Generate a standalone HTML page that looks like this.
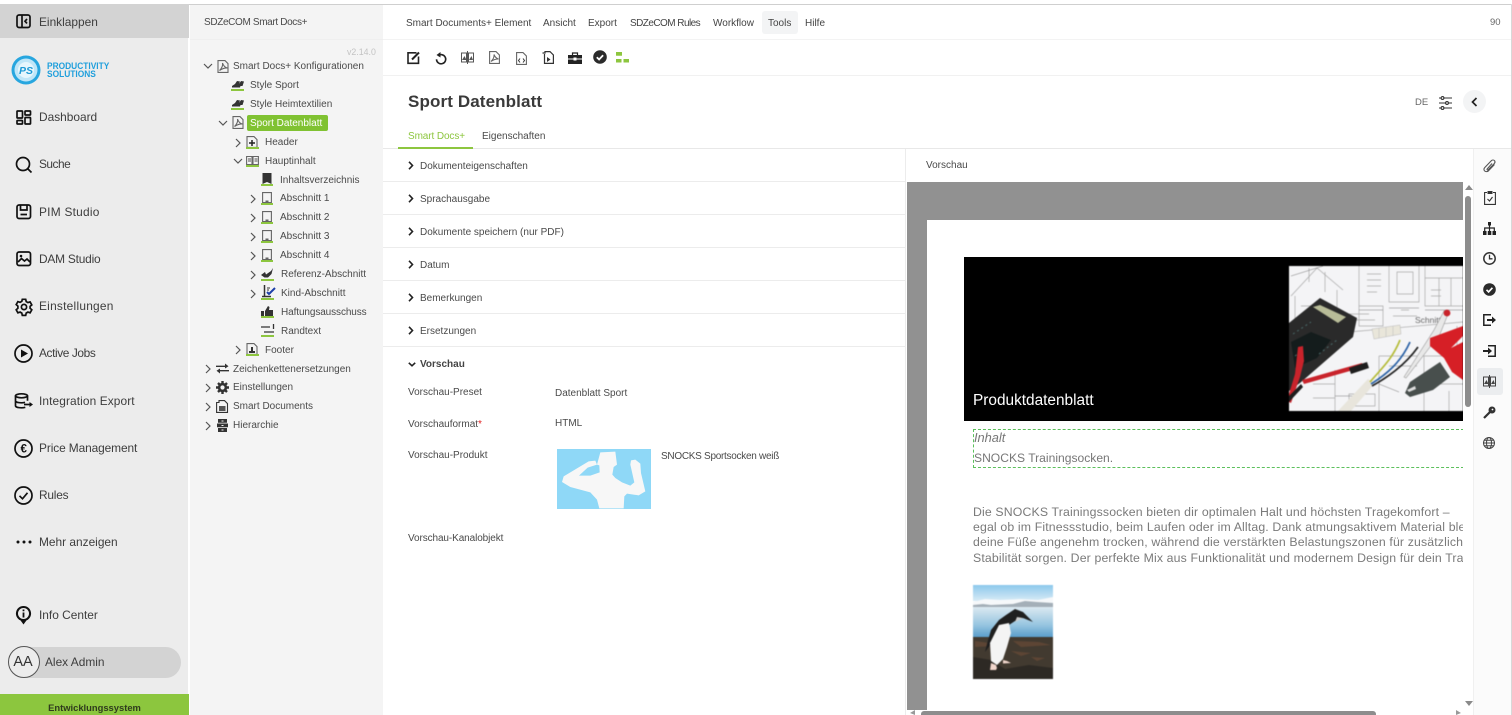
<!DOCTYPE html>
<html lang="de">
<head>
<meta charset="utf-8">
<title>Sport Datenblatt</title>
<style>
html,body{margin:0;padding:0;width:1512px;height:715px;overflow:hidden;background:#fff}
body{position:relative;font-family:"Liberation Sans",sans-serif;color:#444;font-size:10px}
.b{position:absolute}
.t{position:absolute;white-space:nowrap;line-height:14px;height:14px}
.n{font-size:11.900px;left:39px;color:#3d3d3d;margin-top:1px}
.r{font-size:10px;color:#4a4a4a;margin-top:1px}
.m{font-size:10px;color:#444;top:16px;margin-top:1px}
.s{font-size:10px;color:#4a4a4a;left:420px;margin-top:1.500px}
.l{font-size:10px;color:#4a4a4a;left:408px;margin-top:1px}
svg{position:absolute;overflow:visible}
.i{fill:none;stroke:#111;stroke-width:1.7}
.h{fill:none;stroke:#666;stroke-width:1.1}
.c{fill:none;stroke:#555;stroke-width:1.2}
.k{fill:none;stroke:#222;stroke-width:1.6}
.g{position:absolute;height:2px;background:#8dc63f}
.sep{position:absolute;left:383px;width:522px;height:1px;background:#ececec}
.p{left:46px;font-size:12.300px;letter-spacing:.14px;color:#7a7a7a;height:15px;line-height:15px}
</style>
</head>
<body>
<!-- backgrounds -->
<div class="b" style="left:0;top:4px;width:1512px;height:1px;background:#cfcfcf"></div>
<div class="b" style="left:0;top:5px;width:188px;height:710px;background:#ececec"></div>
<div class="b" style="left:0;top:4px;width:189px;height:34px;background:#d3d3d3"></div>
<div class="b" style="left:190px;top:5px;width:193px;height:710px;background:#f4f4f4"></div>
<div class="b" style="left:190px;top:39px;width:193px;height:1px;background:#efefef"></div>
<div class="b" style="left:1511px;top:4px;width:1px;height:711px;background:#d8d8d8"></div>

<!-- main nav -->
<svg style="left:16px;top:14px" width="16" height="15" viewBox="0 0 16 15"><rect class="i" x="1" y="1" width="13" height="12.500" rx="2"/><path class="i" d="M6 1v12.500M11 5l-2 2.200 2 2.200"/></svg>
<div class="t n" style="top:14px">Einklappen</div>

<!-- logo -->
<svg style="left:11px;top:55px" width="30" height="30" viewBox="0 0 30 30"><circle cx="15" cy="15" r="14.500" fill="#27a6df"/><circle cx="15" cy="15" r="11.500" fill="#bfe6f8"/><circle cx="15" cy="15" r="8" fill="#e6f6fd"/><text x="15" y="19" text-anchor="middle" font-family="Liberation Sans" font-size="10.500" font-style="italic" font-weight="700" fill="#1d9ad6">PS</text></svg>
<div class="t" style="left:47px;top:62px;height:8px;line-height:8px;font-size:9px;font-weight:700;color:#1f9fdc;transform:scaleX(.93);transform-origin:0 0">PRODUCTIVITY</div>
<div class="t" style="left:47px;top:70px;height:8px;line-height:8px;font-size:9px;font-weight:700;color:#1f9fdc;transform:scaleX(.93);transform-origin:0 0">SOLUTIONS</div>

<svg style="left:16px;top:110px" width="16" height="15" viewBox="0 0 16 15"><g class="i"><rect x="1" y="1" width="5.500" height="7" rx=".6"/><rect x="9" y="1" width="5.500" height="4" rx=".6"/><rect x="1" y="10.500" width="5.500" height="3.500" rx=".6"/><rect x="9" y="7.500" width="5.500" height="6.500" rx=".6"/></g></svg>
<div class="t n" style="top:109px">Dashboard</div>
<svg style="left:15px;top:156px" width="18" height="18" viewBox="0 0 18 18"><circle class="i" cx="8" cy="8" r="6.500"/><path class="i" d="M12.500 12.500l4 4"/></svg>
<div class="t n" style="top:156px;letter-spacing:-.5px">Suche</div>
<svg style="left:16px;top:204px" width="16" height="16" viewBox="0 0 16 16"><rect class="i" x="1" y="1" width="13.500" height="13.500" rx="2"/><path class="i" d="M4.500 1v5h6.500V1M4.500 10.500h6.500"/></svg>
<div class="t n" style="top:204px;letter-spacing:.25px">PIM Studio</div>
<svg style="left:16px;top:251px" width="16" height="16" viewBox="0 0 16 16"><rect class="i" x="1" y="1" width="13.500" height="13.500" rx="2"/><path class="i" stroke-width="1.300" d="M2 11l3.500-3.500 3 2.500 2.500-2 3 3"/><circle cx="5" cy="5" r="1.300" fill="#111"/></svg>
<div class="t n" style="top:251px;letter-spacing:-.2px">DAM Studio</div>
<svg style="left:15px;top:298px" width="18" height="18" viewBox="0 0 18 18"><circle class="i" cx="9" cy="9" r="2.600"/><path class="i" d="M7.300 1.300h3.400l.5 2.300 1.700 1 2.200-.7 1.700 3-1.700 1.500v1.900l1.700 1.500-1.700 3-2.200-.7-1.700 1-.5 2.300H7.300l-.5-2.300-1.700-1-2.200.7-1.700-3 1.700-1.500V8.100L1.200 6.600l1.700-3 2.200.7 1.700-1z"/></svg>
<div class="t n" style="top:298px;letter-spacing:.25px">Einstellungen</div>
<svg style="left:14px;top:344px" width="19" height="19" viewBox="0 0 19 19"><circle class="i" cx="9.500" cy="9.500" r="8.500"/><path fill="#111" d="M7 5.500l7 4-7 4z"/></svg>
<div class="t n" style="top:345px;letter-spacing:-.4px">Active Jobs</div>
<svg style="left:14px;top:393px" width="19" height="16" viewBox="0 0 19 16"><g class="i" stroke-width="1.500"><ellipse cx="7.500" cy="2.800" rx="6" ry="2"/><path d="M1.500 2.800v10c0 1.200 2.700 2 6 2 1.500 0 2.800-.2 3.800-.5M1.500 7.800c0 1.200 2.700 2 6 2 1.300 0 2.600-.2 3.500-.5M13.500 2.800v5"/><path d="M10 11.500h7.500"/></g><path fill="#111" d="M15.500 9l3.500 2.500-3.500 2.500z"/></svg>
<div class="t n" style="top:393px;letter-spacing:.1px">Integration Export</div>
<svg style="left:14px;top:439px" width="19" height="19" viewBox="0 0 19 19"><circle class="i" cx="9.500" cy="9.500" r="8.500"/><text x="9.700" y="13.500" text-anchor="middle" font-family="Liberation Sans" font-size="11.500" font-weight="700" fill="#111">€</text></svg>
<div class="t n" style="top:440px;letter-spacing:-.1px">Price Management</div>
<svg style="left:14px;top:486px" width="19" height="19" viewBox="0 0 19 19"><circle class="i" cx="9.500" cy="9.500" r="8.500"/><path class="i" d="M5.500 9.800l3 3 5-6"/></svg>
<div class="t n" style="top:487px;letter-spacing:-.2px">Rules</div>
<svg style="left:16px;top:540px" width="16" height="4" viewBox="0 0 16 4"><circle cx="2" cy="2" r="1.500" fill="#111"/><circle cx="8" cy="2" r="1.500" fill="#111"/><circle cx="14" cy="2" r="1.500" fill="#111"/></svg>
<div class="t n" style="top:534px">Mehr anzeigen</div>
<svg style="left:16px;top:606px" width="15" height="19" viewBox="0 0 15 19"><path fill="#111" d="M7.500 0a7.500 7.500 0 0 1 3 14.400L7.500 18.500l-3-4.100A7.500 7.500 0 0 1 7.500 0z"/><circle cx="7.500" cy="7.500" r="5.500" fill="#ececec"/><path fill="#111" d="M6.600 3.500h1.800v1.800H6.600zM6.600 6.500h1.800v5H6.600z"/></svg>
<div class="t n" style="top:607px">Info Center</div>

<div class="b" style="left:8px;top:647px;width:173px;height:31px;border-radius:16px;background:#d3d3d3"></div>
<div class="b" style="left:8px;top:646px;width:30px;height:30px;border-radius:50%;border:1px solid #555;background:#ececec"></div>
<div class="t" style="left:7px;top:655px;width:32px;text-align:center;font-size:14.500px;color:#333">AA</div>
<div class="t" style="left:45px;top:655px;font-size:11.900px;color:#3d3d3d">Alex Admin</div>
<div class="b" style="left:0;top:694px;width:189px;height:21px;background:#8cc63e"></div>
<div class="t" style="left:0;top:701px;width:189px;text-align:center;font-size:9.400px;font-weight:700;color:#2f3b1d">Entwicklungssystem</div>

<!-- tree -->
<div class="t r" style="left:204px;top:15px;letter-spacing:-.35px">SDZeCOM Smart Docs+</div>
<div class="t" style="left:347px;top:45px;font-size:8.800px;color:#c3c3c3">v2.14.0</div>

<svg style="left:203px;top:63px" width="10" height="6"><path class="c" d="M1 1l4 4 4-4"/></svg>
<svg style="left:217px;top:60px" width="12" height="13" viewBox="0 0 12 13"><path class="h" d="M1 .6h7l3 3v8.800H1z"/><path class="h" stroke-width=".9" d="M2.500 10.500C5 8 6 5.500 5.500 3c1 3 2.500 4.500 5 5-3-.2-5 .5-8 2.500z"/></svg>
<div class="t r" style="left:233px;top:59px">Smart Docs+ Konfigurationen</div>

<svg style="left:231px;top:79px" width="14" height="12" viewBox="0 0 14 12"><path fill="#333" d="M1 7l3-2 2-3 3 .5L8 5l2-3 3 .5-1.500 4.500H9.500L9 8.500H1z"/></svg><div class="g" style="left:231px;top:89px;width:13px"></div>
<div class="t r" style="left:250px;top:78px">Style Sport</div>
<svg style="left:231px;top:98px" width="14" height="12" viewBox="0 0 14 12"><path fill="#333" d="M1 7l3-2 2-3 3 .5L8 5l2-3 3 .5-1.500 4.500H9.500L9 8.500H1z"/></svg><div class="g" style="left:231px;top:108px;width:13px"></div>
<div class="t r" style="left:250px;top:97px">Style Heimtextilien</div>

<svg style="left:218px;top:120px" width="10" height="6"><path class="c" d="M1 1l4 4 4-4"/></svg>
<svg style="left:232px;top:116px" width="12" height="13" viewBox="0 0 12 13"><path class="h" d="M1 .6h7l3 3v8.800H1z"/><path class="h" stroke-width=".9" d="M2.500 10.500C5 8 6 5.500 5.500 3c1 3 2.500 4.500 5 5-3-.2-5 .5-8 2.500z"/></svg>
<div class="b" style="left:247px;top:115px;width:81px;height:16px;border-radius:2px;background:#80c232"></div>
<div class="t r" style="left:250px;top:116px;color:#fff">Sport Datenblatt</div>

<svg style="left:235px;top:138px" width="6" height="10"><path class="c" d="M1 1l4 4-4 4"/></svg>
<svg style="left:246px;top:136px" width="12" height="12" viewBox="0 0 12 12"><path class="h" d="M1 .6h7l3 3v7.800H1z"/><path stroke="#222" stroke-width="1.500" d="M6 4v6M3 7h6"/></svg><div class="g" style="left:246px;top:147px;width:13px"></div>
<div class="t r" style="left:265px;top:135px">Header</div>

<svg style="left:233px;top:158px" width="10" height="6"><path class="c" d="M1 1l4 4 4-4"/></svg>
<svg style="left:246px;top:155px" width="13" height="11" viewBox="0 0 13 11"><path class="h" d="M.6 1.500h5.400v8H.6zM7 1.500h5.400v8H7z"/><path stroke="#555" d="M2 4h3M2 6h3M8.500 4h3M8.500 6h3"/></svg><div class="g" style="left:246px;top:165px;width:13px"></div>
<div class="t r" style="left:265px;top:154px">Hauptinhalt</div>

<svg style="left:262px;top:173px" width="10" height="11" viewBox="0 0 10 11"><path fill="#333" d="M.5 0h9v11L5 9 .5 11z"/></svg><div class="g" style="left:261px;top:184px;width:12px"></div>
<div class="t r" style="left:280px;top:173px">Inhaltsverzeichnis</div>

<svg style="left:250px;top:194px" width="6" height="10"><path class="c" d="M1 1l4 4-4 4"/></svg>
<svg style="left:262px;top:192px" width="10" height="11" viewBox="0 0 10 11"><path class="h" d="M.6.600h8.800v10H.6z"/><path fill="#666" d="M3.500 8.500h3v2h-3z"/></svg><div class="g" style="left:261px;top:203px;width:12px"></div>
<div class="t r" style="left:280px;top:191px">Abschnitt 1</div>
<svg style="left:250px;top:213px" width="6" height="10"><path class="c" d="M1 1l4 4-4 4"/></svg>
<svg style="left:262px;top:211px" width="10" height="11" viewBox="0 0 10 11"><path class="h" d="M.6.600h8.800v10H.6z"/><path fill="#666" d="M3.500 8.500h3v2h-3z"/></svg><div class="g" style="left:261px;top:222px;width:12px"></div>
<div class="t r" style="left:280px;top:210px">Abschnitt 2</div>
<svg style="left:250px;top:232px" width="6" height="10"><path class="c" d="M1 1l4 4-4 4"/></svg>
<svg style="left:262px;top:230px" width="10" height="11" viewBox="0 0 10 11"><path class="h" d="M.6.600h8.800v10H.6z"/><path fill="#666" d="M3.500 8.500h3v2h-3z"/></svg><div class="g" style="left:261px;top:241px;width:12px"></div>
<div class="t r" style="left:280px;top:229px">Abschnitt 3</div>
<svg style="left:250px;top:251px" width="6" height="10"><path class="c" d="M1 1l4 4-4 4"/></svg>
<svg style="left:262px;top:249px" width="10" height="11" viewBox="0 0 10 11"><path class="h" d="M.6.600h8.800v10H.6z"/><path fill="#666" d="M3.500 8.500h3v2h-3z"/></svg><div class="g" style="left:261px;top:260px;width:12px"></div>
<div class="t r" style="left:280px;top:248px">Abschnitt 4</div>
<svg style="left:250px;top:270px" width="6" height="10"><path class="c" d="M1 1l4 4-4 4"/></svg>
<svg style="left:260px;top:268px" width="14" height="11" viewBox="0 0 14 11"><path fill="#333" d="M1 7l4-3 1 2.500L11 3l2-3-1.500 6L8 9.500H4.500z"/></svg><div class="g" style="left:261px;top:279px;width:13px"></div>
<div class="t r" style="left:281px;top:267px">Referenz-Abschnitt</div>
<svg style="left:250px;top:289px" width="6" height="10"><path class="c" d="M1 1l4 4-4 4"/></svg>
<svg style="left:262px;top:285px" width="14" height="13" viewBox="0 0 14 13"><path stroke="#333" stroke-width="1.500" fill="none" d="M2.500 0v11M0 11.500h9"/><path stroke="#1d3fa8" stroke-width="2" fill="none" d="M5 7l2 2 6-6"/><path stroke="#333" d="M5 3h3M5 5h2"/></svg><div class="g" style="left:261px;top:298px;width:13px"></div>
<div class="t r" style="left:281px;top:286px">Kind-Abschnitt</div>
<svg style="left:261px;top:306px" width="13" height="11" viewBox="0 0 13 11"><path fill="#333" d="M0 5h3v6H0zM4 5l3-5 1.500 1L8 4h4v7H4z"/></svg><div class="g" style="left:261px;top:316px;width:13px"></div>
<div class="t r" style="left:281px;top:305px;letter-spacing:-.1px">Haftungsausschuss</div>
<svg style="left:261px;top:324px" width="13" height="11" viewBox="0 0 13 11"><path stroke="#333" stroke-width="1.300" fill="none" d="M0 3h9M13 8H3M12.500 0v5"/></svg><div class="g" style="left:261px;top:335px;width:13px"></div>
<div class="t r" style="left:281px;top:324px">Randtext</div>
<svg style="left:235px;top:345px" width="6" height="10"><path class="c" d="M1 1l4 4-4 4"/></svg>
<svg style="left:246px;top:343px" width="12" height="12" viewBox="0 0 12 12"><path class="h" d="M1 .6h7l3 3v7.800H1z"/><path fill="#333" d="M5 4h2v4h2v2H3V8h2z"/></svg><div class="g" style="left:246px;top:354px;width:13px"></div>
<div class="t r" style="left:265px;top:343px">Footer</div>

<svg style="left:205px;top:364px" width="6" height="10"><path class="c" d="M1 1l4 4-4 4"/></svg>
<svg style="left:216px;top:363px" width="13" height="11" viewBox="0 0 13 11"><path stroke="#333" stroke-width="1.300" fill="none" d="M0 3.300h11M13 7.700H2"/><path fill="#333" d="M9 .5l3.500 2.800L9 5.500zM4 5.500L.5 7.700 4 10.500z"/></svg>
<div class="t r" style="left:233px;top:362px">Zeichenkettenersetzungen</div>
<svg style="left:205px;top:383px" width="6" height="10"><path class="c" d="M1 1l4 4-4 4"/></svg>
<svg style="left:216px;top:381px" width="13" height="13" viewBox="0 0 13 13"><circle cx="6.500" cy="6.500" r="3.400" fill="none" stroke="#333" stroke-width="2.600"/><path stroke="#333" stroke-width="2.400" d="M6.500 0v13M0 6.500h13M2 2l9 9M11 2l-9 9" stroke-dasharray="2.400 8.200 2.400"/></svg>
<div class="t r" style="left:233px;top:380px">Einstellungen</div>
<svg style="left:205px;top:402px" width="6" height="10"><path class="c" d="M1 1l4 4-4 4"/></svg>
<svg style="left:216px;top:400px" width="12" height="13" viewBox="0 0 12 13"><path fill="none" stroke="#333" stroke-width="1.100" d="M.6 2.500H3V.6h5.500l3 3v8.800H.6z"/><path fill="#555" d="M3 6h6.500v5H3z"/></svg>
<div class="t r" style="left:233px;top:399px">Smart Documents</div>
<svg style="left:205px;top:421px" width="6" height="10"><path class="c" d="M1 1l4 4-4 4"/></svg>
<svg style="left:217px;top:419px" width="11" height="13" viewBox="0 0 11 13"><path fill="#333" d="M1 0h9v3.800H1zM0 4.500h11v3.800H0zM1 9h9v4H1z"/><path fill="#f4f4f4" d="M4.500 1.500h2v1h-2zM4.500 6h2v1h-2zM4.500 10.500h2v1h-2z"/></svg>
<div class="t r" style="left:233px;top:418px">Hierarchie</div>

<!-- top menu -->
<div class="t m" style="left:406px">Smart Documents+ Element</div>
<div class="t m" style="left:543px">Ansicht</div>
<div class="t m" style="left:588px">Export</div>
<div class="t m" style="left:630px;letter-spacing:-.55px">SDZeCOM Rules</div>
<div class="t m" style="left:713px">Workflow</div>
<div class="b" style="left:762px;top:11px;width:36px;height:23px;border-radius:3px;background:#f3f4f5"></div>
<div class="t m" style="left:768px">Tools</div>
<div class="t m" style="left:805px">Hilfe</div>
<div class="t" style="left:1490px;top:16px;font-size:9.500px;color:#666">90</div>
<div class="b" style="left:383px;top:39px;width:1128px;height:1px;background:#f3f3f3"></div>
<div class="b" style="left:383px;top:75px;width:1128px;height:1px;background:#f1f1f1"></div>

<!-- toolbar icons -->
<svg style="left:407px;top:51px" width="13" height="13" viewBox="0 0 13 13"><path class="k" d="M9.500 1.800H1v10.500h10.500V5.500"/><path stroke="#222" stroke-width="2" d="M5 8.500L12 1.500"/></svg>
<svg style="left:435px;top:52px" width="12" height="13" viewBox="0 0 12 13"><path class="k" d="M3 3.800a4.600 4.600 0 1 1-1.500 3.500"/><path fill="#222" d="M5.500 0v5.500L1.500 3z"/></svg>
<svg style="left:461px;top:51px" width="13" height="13" viewBox="0 0 13 13"><path fill="none" stroke="#555" d="M.5 2h5v9h-5zM7.500 2h5v9h-5zM6.500 0v13"/><path fill="#555" d="M1 9l2.500-4 2 4zM8 9l2.500-4 1.500 4z"/></svg>
<svg style="left:489px;top:51px" width="11" height="13" viewBox="0 0 11 13"><path class="h" d="M.6.600h6.400l3.400 3.400v8.400H.6z"/><path class="h" stroke-width=".8" d="M2 10.500C4.500 8 5.500 6 5 3.500c1 2.500 2.500 4 4.500 4.500-3 0-5 .5-7.500 2.500z"/></svg>
<svg style="left:516px;top:52px" width="11" height="13" viewBox="0 0 11 13"><path class="h" d="M.6.600h6.400l3.400 3.400v8.400H.6z"/><path stroke="#333" fill="none" d="M4 6.500L2.500 8.500 4 10.500M7 6.500l1.500 2-1.500 2"/></svg>
<svg style="left:542px;top:51px" width="12" height="13" viewBox="0 0 12 13"><path fill="none" stroke="#333" stroke-width="1.200" d="M.5 2H3V.6h5l3.400 3.400v8.400H2.500V3"/><path fill="#333" d="M5 6l3.500 2.500L5 11z"/></svg>
<svg style="left:568px;top:52px" width="14" height="12" viewBox="0 0 14 12"><path fill="#222" d="M0 3h14v3.500H8.500V5.500h-3v1H0zM0 7.500h5.500v1h3v-1H14V12H0z"/><path fill="none" stroke="#222" stroke-width="1.200" d="M4.500 3V1h5v2"/></svg>
<svg style="left:593px;top:50px" width="14" height="14" viewBox="0 0 14 14"><circle cx="7" cy="7" r="6.800" fill="#2b2b2b"/><path stroke="#fff" stroke-width="1.800" fill="none" d="M3.800 7.200l2.300 2.300 4-4.300"/></svg>
<svg style="left:616px;top:52px" width="13" height="11" viewBox="0 0 13 11"><path fill="#8dc63f" d="M0 0h6v3.800H0zM0 7h5.500v3.500H0zM7.500 7H13v3.500H7.500z"/></svg>

<!-- title -->
<div class="t" style="left:408px;top:92px;height:20px;line-height:20px;font-size:17px;font-weight:700;letter-spacing:.12px;color:#3a3a3a">Sport Datenblatt</div>
<div class="t" style="left:1415px;top:95px;font-size:9.500px;color:#666;margin-top:1px">DE</div>
<svg style="left:1439px;top:96px" width="13" height="14" viewBox="0 0 13 14"><g stroke="#333" stroke-width="1.100" fill="none"><path d="M0 2h13M0 7h13M0 12h13"/><circle cx="3.500" cy="2" r="1.400" fill="#fff"/><circle cx="8" cy="7" r="1.400" fill="#fff"/><circle cx="3.500" cy="12" r="1.400" fill="#fff"/></g></svg>
<div class="b" style="left:1463px;top:90px;width:23px;height:23px;border-radius:50%;background:#f3f4f5"></div>
<svg style="left:1471px;top:97px" width="7" height="10"><path fill="none" stroke="#222" stroke-width="1.700" d="M5.500 1L1.500 5l4 4"/></svg>

<!-- tabs -->
<div class="t" style="left:408px;top:130px;font-size:10px;letter-spacing:-.1px;color:#8dc63f">Smart Docs+</div>
<div class="t" style="left:482px;top:130px;font-size:10px;color:#4a4a4a">Eigenschaften</div>
<div class="b" style="left:383px;top:148px;width:1128px;height:1px;background:#e8e8e8"></div>
<div class="b" style="left:398px;top:147px;width:75px;height:2px;background:#8dc63f"></div>

<!-- left sections -->
<svg style="left:408px;top:161px" width="6" height="9"><path class="k" d="M1 .8l3.500 3.700L1 8.200"/></svg><div class="t s" style="top:158px">Dokumenteigenschaften</div>
<div class="sep" style="top:181px"></div>
<svg style="left:408px;top:194px" width="6" height="9"><path class="k" d="M1 .8l3.500 3.700L1 8.200"/></svg><div class="t s" style="top:191px">Sprachausgabe</div>
<div class="sep" style="top:214px"></div>
<svg style="left:408px;top:227px" width="6" height="9"><path class="k" d="M1 .8l3.500 3.700L1 8.200"/></svg><div class="t s" style="top:224px">Dokumente speichern (nur PDF)</div>
<div class="sep" style="top:247px"></div>
<svg style="left:408px;top:260px" width="6" height="9"><path class="k" d="M1 .8l3.500 3.700L1 8.200"/></svg><div class="t s" style="top:257px">Datum</div>
<div class="sep" style="top:280px"></div>
<svg style="left:408px;top:293px" width="6" height="9"><path class="k" d="M1 .8l3.500 3.700L1 8.200"/></svg><div class="t s" style="top:290px">Bemerkungen</div>
<div class="sep" style="top:313px"></div>
<svg style="left:408px;top:326px" width="6" height="9"><path class="k" d="M1 .8l3.500 3.700L1 8.200"/></svg><div class="t s" style="top:323px">Ersetzungen</div>
<div class="sep" style="top:346px"></div>
<svg style="left:408px;top:362px" width="8" height="5"><path class="k" d="M.8 .8l3.200 3 3.200-3"/></svg><div class="t s" style="top:356px;font-weight:700;color:#444">Vorschau</div>

<div class="t l" style="top:385px">Vorschau-Preset</div>
<div class="t" style="left:555px;top:387px;font-size:10px;color:#4a4a4a">Datenblatt Sport</div>
<div class="t l" style="top:417px">Vorschauformat<span style="color:#e02020">*</span></div>
<div class="t" style="left:555px;top:417px;font-size:10px;color:#4a4a4a">HTML</div>
<div class="t l" style="top:448px">Vorschau-Produkt</div>
<svg style="left:557px;top:449px" width="94" height="60" viewBox="0 0 94 60"><rect width="94" height="60" fill="#8fd8f7"/><g transform="scale(.3333) translate(-470,-298)"><path fill="#f7f7f7" d="M600 308L645 306 650 345 640 352 636 375 645 385 665 398 690 408 702 398 690 345 692 332 705 330 720 342 722 370 735 425 715 437 680 432 672 440 670 476 597 476 590 450 570 428 510 412 485 397 490 380 520 362 565 335 585 333 590 345 562 354 536 378 570 378 598 368 597 347 590 345z"/></g></svg>
<div class="t" style="left:661px;top:450px;font-size:10px;letter-spacing:-.28px;color:#4a4a4a">SNOCKS Sportsocken weiß</div>
<div class="t l" style="top:531px;letter-spacing:-.1px">Vorschau-Kanalobjekt</div>

<!-- preview -->
<div class="b" style="left:905px;top:149px;width:1px;height:566px;background:#ececec"></div>
<div class="t" style="left:926px;top:159px;font-size:10px;color:#4a4a4a">Vorschau</div>
<div class="b" style="left:1473px;top:149px;width:38px;height:566px;background:#fbfbfb;border-left:1px solid #f0f0f0;box-sizing:border-box"></div>
<div class="b" style="left:907px;top:182px;width:556px;height:528px;background:#919191"></div>
<div class="b" style="left:927px;top:220px;width:536px;height:495px;background:#fff;overflow:hidden">
  <div class="b" style="left:37px;top:37px;width:499px;height:164px;background:#000"></div>
  <svg style="left:362px;top:46px;overflow:hidden;filter:blur(.45px)" width="174" height="145" viewBox="0 0 174 145">
    <rect width="174" height="145" fill="#f4f4f6"/>
    <g stroke="#a8a8a8" stroke-width=".7" fill="none">
      <path d="M2 30L28 2l26 22M6 62V30M48 62V24M0 62h50M12 40h20v22M70 0v40h24v20H70V40M100 0v36h30V0M108 6h16v22h-16zM136 0v40h38M136 12h38M150 12v28M162 12v28"/>
      <path d="M78 8h14M78 14h14M78 20h14M78 26h10M104 50h24M60 48h20M66 54h20M142 24h10M142 30h10"/>
      <path d="M60 66l114-10M90 90h84M90 90v55M46 104v41M24 118h22M24 132h22M100 100h28M120 118h54M135 90v55M160 125v20M60 128h26v12H60z"/>
      <path d="M20 2v14M36 6v20M112 44l8 0M168 60v20"/>
    </g>
    <g stroke="#777" stroke-width=".5" fill="none"><path d="M2 10L34 0M70 44h24M100 42h30M136 44h38M46 130h20M90 118l20 8"/></g>
    <text x="126" y="57" font-family="Liberation Sans" font-size="8.500" fill="#666">Schnitt</text>
    <path fill="#e9e6da" stroke="#bbb" stroke-width=".5" d="M83 63l28-4 1 9-27 5zM90 62v10M97 61v10M104 60v10"/>
    <path fill="#e8e5dc" d="M49 145l30-32 7 4-24 28z"/>
    <path fill="#2a2a2a" d="M0 57L31 32l37 20-4 19-53 46L0 125z"/>
    <path fill="#b8bc98" d="M24 41l7-2 26 12-8 6z"/>
    <path fill="#141c1c" d="M2 76l20-10 20 8-14 18-22 10z"/>
    <path fill="none" stroke="#4a6a6a" stroke-width="1" stroke-dasharray="2 3" d="M4 68l18-12M30 88l18-14M6 90l8-6"/>
    <path fill="#c9232b" d="M9 81l5-1 1 15-4 16-9 26-2-1v-8l6-20zM13 114l60-17 2 4-60 17z"/>
    <path fill="#1e1e1e" d="M60 102l18-6 2 6-18 6zM0 130l12-12 2 3-14 15z"/>
    <path fill="none" stroke="#b5bc3a" stroke-width="1.700" d="M81 116c10-12 22-22 30-42"/>
    <path fill="none" stroke="#2b62a6" stroke-width="1.700" d="M82 118c16-10 30-22 39-42"/>
    <path fill="none" stroke="#222" stroke-width="1.700" d="M83 120c18-10 34-22 46-39"/>
    <path fill="#e8e8e8" stroke="#999" stroke-width=".6" d="M115 111l30-47 10-19 4 3-8 20-34 44z"/>
    <circle cx="158" cy="47" r="3.400" fill="#c9232b"/>
    <path fill="#d61f26" d="M141 72l33-12v10l-12 12 12-6v38l-11-8-8-14-14-12z"/>
    <path fill="#484f4d" d="M116 127l5-11 30-20 10 15-17 13-23 7z"/>
    <path fill="#ddd" d="M118 124l8-4 1 3-7 3z"/>
  </svg>
  <div class="t" style="left:46px;top:171px;height:20px;line-height:20px;font-size:15.400px;color:#fff">Produktdatenblatt</div>
  <div class="b" style="left:46px;top:209px;width:490px;height:37px;border:1px dashed #5cc05c;border-right:0"></div>
  <div class="t" style="left:47px;top:210px;font-size:12.800px;font-style:italic;color:#777;height:15px;line-height:15px">Inhalt</div>
  <div class="t" style="left:47px;top:231px;font-size:12.100px;color:#777;height:15px;line-height:15px">SNOCKS Trainingsocken.</div>
  <div class="t p" style="top:285px">Die SNOCKS Trainingssocken bieten dir optimalen Halt und höchsten Tragekomfort –</div>
  <div class="t p" style="top:300px">egal ob im Fitnessstudio, beim Laufen oder im Alltag. Dank atmungsaktivem Material bleiben</div>
  <div class="t p" style="top:315px">deine Füße angenehm trocken, während die verstärkten Belastungszonen für zusätzliche</div>
  <div class="t p" style="top:331px">Stabilität sorgen. Der perfekte Mix aus Funktionalität und modernem Design für dein Training</div>
  <svg style="left:46px;top:365px;overflow:hidden;filter:blur(.4px)" width="80" height="94" viewBox="0 0 80 94">
    <defs><linearGradient id="sk" x1="0" y1="0" x2="0" y2="1"><stop offset="0" stop-color="#8cc8ec"/><stop offset="1" stop-color="#d8ebf6"/></linearGradient><linearGradient id="se" x1="0" y1="0" x2="0" y2="1"><stop offset="0" stop-color="#dce9f1"/><stop offset=".6" stop-color="#97c5e0"/><stop offset="1" stop-color="#5a9ecb"/></linearGradient></defs>
    <rect width="80" height="16" fill="url(#sk)"/>
    <path fill="#f6f8fa" d="M0 17l12-3 15 1 20-1 18 1 15-3v10H0z"/>
    <path fill="#a4afb8" d="M0 20l10-1 8 1 22-1 12-3 12 1 16 1v4H0z"/>
    <rect y="22" width="80" height="30" fill="url(#se)"/>
    <rect y="52" width="80" height="42" fill="#423a30"/>
    <path fill="#2d2924" d="M0 72l18 3 14 9 24-4 24 3v11H0z"/>
    <path fill="#6a4a36" opacity=".7" d="M2 56l14 2 4 3-18 1zM40 56l26 1 12 3-30 2zM38 66l20 2-10 3zM58 72l14 1-8 3z"/>
    <path fill="#1f1f1f" d="M33 30l9-6 8 3 10 10-10-4-8 3-6 4-2 3-10 4-6 12-6 8 2-8 4-14 8-10z"/>
    <path fill="#f4f4f4" d="M26 40l10-2 2 10-4 14-4 12-6 6-6-4-1-18z"/>
    <path fill="#ccc" d="M44 32l6 1-8 4z"/>
    <path fill="#f1d6cc" d="M18 78l5 2 1 3-1 2h-6zM30 75l4 1 4 2-8 .5z"/>
  </svg>
</div>

<!-- preview scrollbars -->
<div class="b" style="left:1463px;top:182px;width:10px;height:528px;background:#fff"></div>
<svg style="left:1465px;top:185px" width="8" height="6"><path fill="#8a8a8a" d="M4 0l4 5H0z"/></svg>
<div class="b" style="left:1465px;top:196px;width:6px;height:211px;border-radius:3px;background:#8d8d8d"></div>
<svg style="left:1465px;top:700px" width="8" height="6"><path fill="#8a8a8a" d="M4 6L0 1h8z"/></svg>
<div class="b" style="left:921px;top:711px;width:455px;height:4px;border-radius:3px 3px 0 0;background:#8d8d8d"></div>
<svg style="left:910px;top:710px" width="6" height="5"><path fill="#999" d="M0 3l5-3v5z"/></svg>
<svg style="left:1456px;top:710px" width="6" height="5"><path fill="#999" d="M5 3L0 0v5z"/></svg>

<!-- right rail -->
<svg style="left:1483px;top:159px" width="13" height="14" viewBox="0 0 13 14"><path fill="none" stroke="#555" stroke-width="1.100" d="M11.500 5.500L5.500 11.800c-1.400 1.400-3.800.9-4.400-.6-.3-1 0-2 .7-2.700L8.300 1.700c1-1 2.700-.9 3.400.2.500.9.300 1.900-.4 2.600L5.200 10.800c-.6.600-1.500.1-1.100-.8L9 4.500"/></svg>
<svg style="left:1484px;top:190px" width="12" height="15" viewBox="0 0 12 15"><path fill="none" stroke="#333" stroke-width="1.100" d="M3 2.500H.6v11.900h10.800V2.500H9"/><path fill="#333" d="M3.500 1h5v3h-5z"/><path fill="none" stroke="#333" stroke-width="1.100" d="M3.500 9l2 2 3-4"/></svg>
<svg style="left:1483px;top:222px" width="13" height="13" viewBox="0 0 13 13"><path fill="#222" d="M5 0h3v3.500H5zM0 9h3.500v4H0zM4.800 9h3.500v4H4.800zM9.500 9H13v4H9.500z"/><path fill="none" stroke="#222" stroke-width="1.200" d="M6.500 3v6M1.700 9V6h9.600v3"/></svg>
<svg style="left:1483px;top:252px" width="13" height="13" viewBox="0 0 13 13"><circle cx="6.500" cy="6.500" r="5.700" fill="none" stroke="#333" stroke-width="1.500"/><path fill="none" stroke="#333" stroke-width="1.300" d="M6.500 2.800v4h3"/></svg>
<svg style="left:1483px;top:283px" width="13" height="13" viewBox="0 0 13 13"><circle cx="6.500" cy="6.500" r="6.300" fill="#2b2b2b"/><path stroke="#fff" stroke-width="1.700" fill="none" d="M3.500 6.800l2.100 2.100 3.800-4.100"/></svg>
<svg style="left:1483px;top:314px" width="13" height="12" viewBox="0 0 13 12"><path fill="none" stroke="#222" stroke-width="1.500" d="M8 .8H.8v10.400H8"/><path fill="#222" d="M4 5h5V2.500L13 6l-4 3.500V7H4z"/></svg>
<svg style="left:1483px;top:345px" width="13" height="12" viewBox="0 0 13 12"><path fill="none" stroke="#222" stroke-width="1.500" d="M5 .8h7.200v10.400H5"/><path fill="#222" d="M0 5h5V2.500L9 6 5 9.500V7H0z"/></svg>
<div class="b" style="left:1477px;top:368px;width:26px;height:27px;border-radius:3px;background:#ebedef"></div>
<svg style="left:1483px;top:375px" width="13" height="13" viewBox="0 0 13 13"><path fill="none" stroke="#444" d="M.5 2h5v9h-5zM7.500 2h5v9h-5zM6.500 0v13"/><path fill="#444" d="M1 9l2.500-4 2 4zM8 9l2.500-4 1.500 4z"/></svg>
<svg style="left:1483px;top:406px" width="13" height="13" viewBox="0 0 13 13"><circle cx="9" cy="4" r="3.500" fill="#333"/><path stroke="#333" stroke-width="2.200" d="M7 6L1 12"/><circle cx="9.500" cy="3.500" r=".9" fill="#fbfbfb"/></svg>
<svg style="left:1483px;top:437px" width="12" height="12" viewBox="0 0 12 12"><g fill="none" stroke="#444" stroke-width="1"><circle cx="6" cy="6" r="5.500"/><ellipse cx="6" cy="6" rx="2.500" ry="5.500"/><path d="M.5 6h11M1.200 3.300h9.600M1.200 8.700h9.600"/></g></svg>
</body>
</html>
